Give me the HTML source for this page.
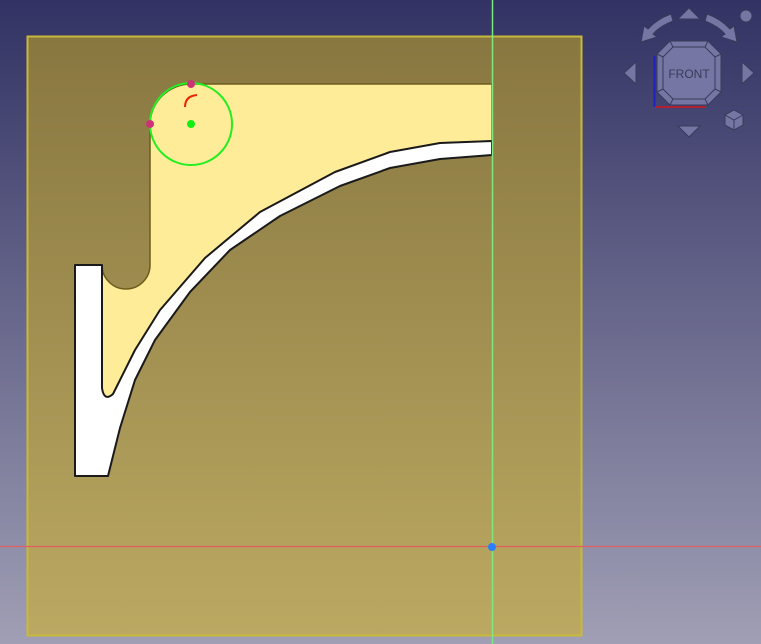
<!DOCTYPE html>
<html><head><meta charset="utf-8"><style>
html,body{margin:0;padding:0;width:761px;height:644px;overflow:hidden}
svg{display:block}
</style></head><body>
<svg width="761" height="644" viewBox="0 0 761 644" xmlns="http://www.w3.org/2000/svg">
<defs>
<linearGradient id="bg" x1="0" y1="0" x2="0" y2="1">
<stop offset="0" stop-color="#323264"/><stop offset="1" stop-color="#a09fb5"/>
</linearGradient>
<linearGradient id="pl" x1="0" y1="0" x2="0" y2="1">
<stop offset="0" stop-color="#887740"/><stop offset="1" stop-color="#bba962"/>
</linearGradient>
</defs>
<rect width="761" height="644" fill="url(#bg)"/>
<rect x="27.5" y="36.5" width="554" height="599" fill="url(#pl)" stroke="#c9b93a" stroke-width="2"/>
<path d="M191,84 L492,84 L492,141 L440,143 L390,152 L335,172 L260,212 L205,258 L160,310 L135,350 L118,384 L113,394 Q104,402 102,388 L102,265 A24,24 0 0 0 150,265 L150,125 A41,41 0 0 1 191,84 Z" fill="#feec98" stroke="#6b5c1c" stroke-width="1.5"/>
<path d="M75,265 L102,265 L102,388 Q104,402 113,394 L118,384 L135,350 L160,310 L205,258 L260,212 L335,172 L390,152 L440,143 L492,141 L492,155 L440,159 L390,168 L340,186 L280,216 L230,250 L190,292 L155,340 L135,380 L120,428 L108,476 L75,476 Z" fill="#fff" stroke="#1a1a1a" stroke-width="2" stroke-linejoin="round"/>
<line x1="492.5" y1="0" x2="492.5" y2="644" stroke="#7de87d" stroke-width="1.5"/>
<line x1="0" y1="546.5" x2="761" y2="546.5" stroke="#e06060" stroke-width="1.2"/>
<circle cx="492" cy="547" r="4" fill="#2a7fff"/>
<circle cx="191" cy="124" r="41" fill="none" stroke="#22ee22" stroke-width="2"/>
<circle cx="191" cy="124" r="4" fill="#11ee11"/>
<circle cx="191" cy="84" r="4" fill="#cc3377"/>
<circle cx="150" cy="124" r="4" fill="#cc3377"/>
<path d="M185,107 Q185,96 197,95" fill="none" stroke="#ee2200" stroke-width="2"/>
<g fill="#7676a4" stroke="#3a3a5a" stroke-width="1">
<polygon points="678,19 689,8 700,19"/>
<polygon points="678,126 700,126 689,137"/>
<polygon points="636,62 636,84 624,73"/>
<polygon points="742,62 742,84 754,73"/>
<circle cx="746" cy="16" r="6"/>
<path d="M671,14 L673,21 Q660,26 653,34 L657,37 L641,42 L644,26 L648,29 Q657,19 671,14 Z"/>
<path d="M707,14 L705,21 Q718,26 725,34 L721,37 L737,42 L734,26 L730,29 Q721,19 707,14 Z"/>
<polygon points="670,41 708,41 721,54 721,92 708,105 670,105 657,92 657,54"/>
<polygon points="673,47 705,47 715,57 715,89 705,99 673,99 663,89 663,57"/>
<polygon points="725,115 734,110 743,115 743,125 734,130 725,125"/>
</g>
<path d="M670,41 L673,47 M708,41 L705,47 M721,54 L715,57 M721,92 L715,89 M708,105 L705,99 M670,105 L673,99 M657,92 L663,89 M657,54 L663,57" stroke="#3a3a5a" fill="none"/>
<path d="M734,120 L734,130 M725,115 L734,120 L743,115" stroke="#3a3a5a" fill="none"/>
<text x="689" y="78" font-family="Liberation Sans, sans-serif" font-size="12" fill="#3a3a5a" text-anchor="middle">FRONT</text>
<line x1="654.5" y1="56" x2="654.5" y2="107" stroke="#2020c0" stroke-width="2"/>
<line x1="655" y1="107" x2="706" y2="107" stroke="#b02030" stroke-width="2"/>
</svg>
</body></html>
